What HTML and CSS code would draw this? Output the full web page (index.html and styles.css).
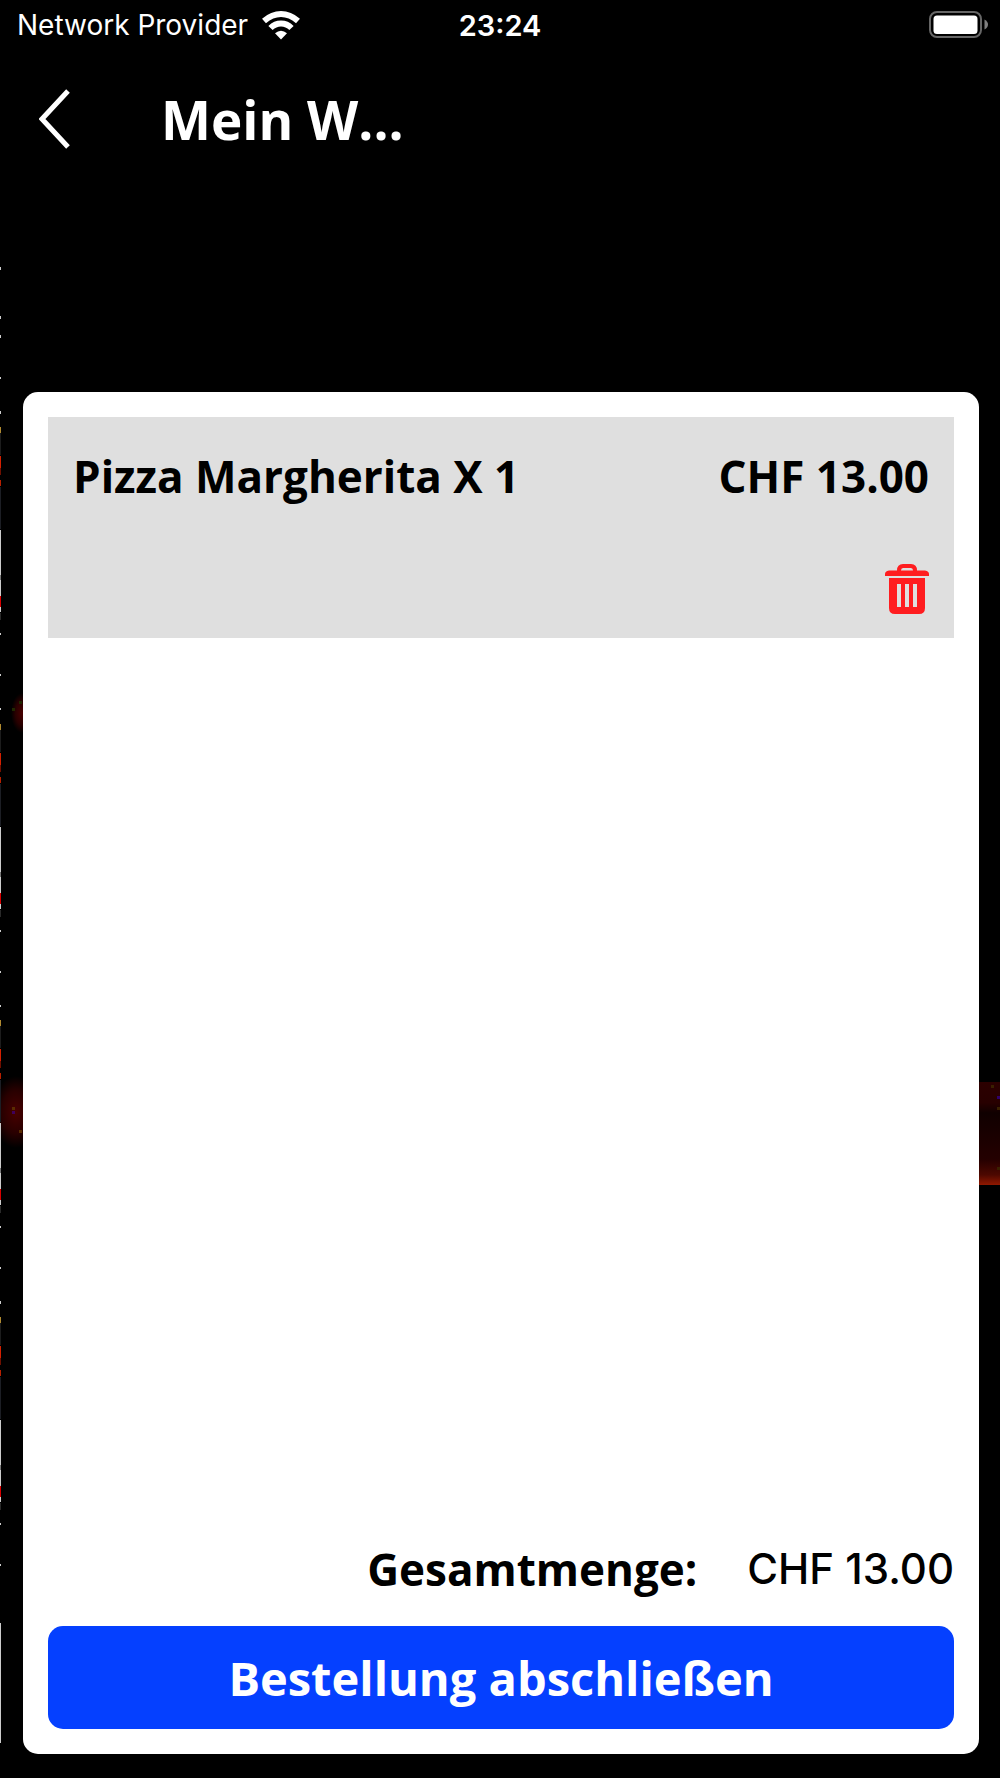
FILE: index.html
```html
<!DOCTYPE html>
<html lang="de">
<head>
<meta charset="utf-8">
<meta name="viewport" content="width=device-width, initial-scale=1">
<title>Mein Warenkorb</title>
<link rel="stylesheet" href="styles.css">
</head>
<body>
<div class="screen">
  <svg class="edge edge-left" width="24" height="1778" viewBox="0 0 24 1778" aria-hidden="true">
    <defs>
      <radialGradient id="ember">
        <stop offset="0" stop-color="#480000"/>
        <stop offset="0.6" stop-color="#280000"/>
        <stop offset="1" stop-color="#000"/>
      </radialGradient>
      <g id="strip">
        <path fill="#b08a30" d="M0 0h1v6h-1z"/>
        <path fill="#1c1c1c" d="M0 6h1v22h-1z"/>
        <path fill="#d42000" d="M0 29h1v12h-1z"/>
        <path fill="#701000" d="M0 41h1v7h-1z"/>
        <path fill="#b82000" d="M0 53h1v6h-1z"/>
        <path fill="#1c1e24" d="M0 60h1v42h-1z"/>
        <path fill="#ccc" d="M0 103h1v45h-1z"/>
        <path fill="#777" d="M0 148h1v5h-1z"/>
        <path fill="#ccc" d="M0 153h1v16h-1z"/>
        <path fill="#d80000" d="M0 169h1v11h-1z"/>
        <path fill="#ccc" d="M0 180h1v5h-1z"/>
        <path fill="#2a2a2a" d="M0 186h1v7h-1z"/>
        <path fill="#ccc" d="M0 206h1v2h-1zM0 247h1v2h-1z"/>
      </g>
    </defs>
    <ellipse cx="22" cy="713" rx="11" ry="20" fill="url(#ember)"/>
    <ellipse cx="16" cy="1112" rx="24" ry="36" fill="url(#ember)"/>
    <path fill="#202800" d="M19 701h3v3h-3zM12 708h3v3h-3z"/>
    <path fill="#5a2c00" d="M12 1107h3v3h-3zM19 1130h3v3h-3z"/>
    <path fill="#40005a" d="M12 1111h3v3h-3z"/>
    <path fill="#ccc" d="M0 267h1v3h-1zM0 316h1v3h-1zM0 335h1v3h-1zM0 377h1v2h-1zM0 411h1v3h-1zM0 708h1v2h-1zM0 1005h1v2h-1zM0 1301h1v3h-1zM0 1623h1v120h-1z"/>
    <use href="#strip" y="427"/>
    <use href="#strip" y="724"/>
    <use href="#strip" y="1020"/>
    <use href="#strip" y="1317"/>
  </svg>
  <svg class="edge edge-right" width="21" height="1778" viewBox="0 0 21 1778" aria-hidden="true">
    <defs>
      <linearGradient id="glow" x1="0" y1="0" x2="0" y2="1">
        <stop offset="0" stop-color="#2c0000"/>
        <stop offset="0.2" stop-color="#280000"/>
        <stop offset="0.3" stop-color="#100000"/>
        <stop offset="0.75" stop-color="#240000"/>
        <stop offset="0.9" stop-color="#4c0800"/>
        <stop offset="1" stop-color="#901800"/>
      </linearGradient>
    </defs>
    <path fill="url(#glow)" d="M0 1082h21v103h-21z"/>
    <path fill="#3a2000" d="M12 1085h3v3h-3zM18 1107h3v3h-3zM18 1167h3v3h-3z"/>
    <path fill="#30006a" d="M18 1096h3v3h-3z"/>
  </svg>

  <div class="status">
    <div class="carrier">
      <span>Network Provider</span>
      <svg width="38" height="30" viewBox="0 0 38 30" aria-hidden="true">
        <g fill="none" stroke="#fff" stroke-width="6">
          <path d="M2 11Q10 4 19 4T36 11"/>
          <path d="M8.500 18Q13 13.500 19 13.500T29.500 18"/>
        </g>
        <path fill="#fff" d="M19 29.500l-6-6.200q6-5 12 0z"/>
      </svg>
    </div>
    <time class="clock">23:24</time>
    <svg class="battery" width="60" height="28" viewBox="0 0 60 28" aria-hidden="true">
      <rect x="2" y="1" width="51" height="25" rx="7" fill="none" stroke="#666" stroke-width="2"/>
      <rect x="5.500" y="4.500" width="44" height="18.500" rx="3.500" fill="#fff"/>
      <path fill="#808080" d="M56.500 8.500q3.500 2 3.500 5t-3.500 5z"/>
    </svg>
  </div>

  <header class="header">
    <button class="back" type="button" aria-label="Zurück">
      <svg width="32" height="60" viewBox="0 0 32 60" aria-hidden="true">
        <path d="M29 2L3 30L29 58" fill="none" stroke="#fff" stroke-width="5"/>
      </svg>
    </button>
    <h1 class="title">Mein W...</h1>
  </header>

  <main class="card">
    <section class="item">
      <div class="item-row">
        <span>Pizza Margherita X 1</span>
        <span>CHF 13.00</span>
      </div>
      <button class="remove" type="button" aria-label="Entfernen">
        <svg width="44" height="50" viewBox="0 0 44 50" aria-hidden="true">
          <path fill="#ff1d20" fill-rule="evenodd" d="M0 12V10Q0 7 4 6.500H12Q12 0 18 0H26Q32 0 32 6.500H40Q44 7 44 10V12zM16 6.500H28Q28 4 26 4H18Q16 4 16 6.500zM4 14H40V44Q40 50 34 50H10Q4 50 4 44zM12 20V43H16V20zM20 20V43H24V20zM28 20V43H32V20z"/>
        </svg>
      </button>
    </section>
    <div class="total">
      <span class="total-label">Gesamtmenge:</span>
      <span class="total-value">CHF 13.00</span>
    </div>
    <button class="checkout" type="button">Bestellung abschließen</button>
  </main>
</div>
</body>
</html>
```
FILE: styles.css
```css
* {
  box-sizing: border-box;
}

body {
  margin: 0;
  background: #000;
  color: #000;
  font-family: "Open Sans", sans-serif;
  font-weight: 700;
}

button {
  border: 0;
  padding: 0;
  background: none;
  font: inherit;
  cursor: pointer;
}

svg {
  display: block;
}

.screen {
  position: relative;
  display: flex;
  flex-direction: column;
  min-height: 100vh;
  padding-bottom: 24px;
  overflow: hidden;
}

.edge {
  position: absolute;
  top: 0;
}

.edge-left {
  left: 0;
}

.edge-right {
  right: 0;
}

.status {
  display: grid;
  grid-template-columns: 1fr auto 1fr;
  align-items: center;
  height: 50px;
  padding: 0 12px;
  color: #fff;
  font-family: Inter, sans-serif;
  font-size: 28px;
}

.carrier {
  display: flex;
  align-items: center;
  gap: 14px;
  padding-left: 5px;
  font-weight: 400;
}

.clock {
  font-size: 29px;
  font-weight: 600;
}

.battery {
  justify-self: end;
}

.header {
  display: flex;
  align-items: center;
  gap: 90px;
  height: 140px;
  padding: 0 39px;
  margin-bottom: 202px;
  color: #fff;
}

.back {
  margin-bottom: 2px;
}

.title {
  margin: 0;
  font-size: 53px;
  font-weight: 700;
  line-height: 74px;
}

.card {
  position: relative;
  display: flex;
  flex: 1;
  flex-direction: column;
  margin: 0 21px 0 23px;
  padding: 25px;
  border-radius: 15px;
  background: #fff;
}

.item {
  display: flex;
  flex-direction: column;
  gap: 58px;
  padding: 29px 25px 24px;
  background: #dfdfdf;
}

.item-row {
  display: flex;
  justify-content: space-between;
  font-size: 44px;
  line-height: 60px;
}

.remove {
  align-self: flex-end;
}

.total {
  display: flex;
  align-items: center;
  justify-content: flex-end;
  gap: 50px;
  margin-top: auto;
  margin-bottom: 27px;
}

.total-label {
  font-size: 44px;
  line-height: 60px;
}

.total-value {
  margin-bottom: 2px;
  font-family: Inter, sans-serif;
  font-size: 42px;
  font-weight: 500;
}

.checkout {
  height: 103px;
  border-radius: 15px;
  background: #0540ff;
  color: #fff;
  font-size: 47px;
}
```
